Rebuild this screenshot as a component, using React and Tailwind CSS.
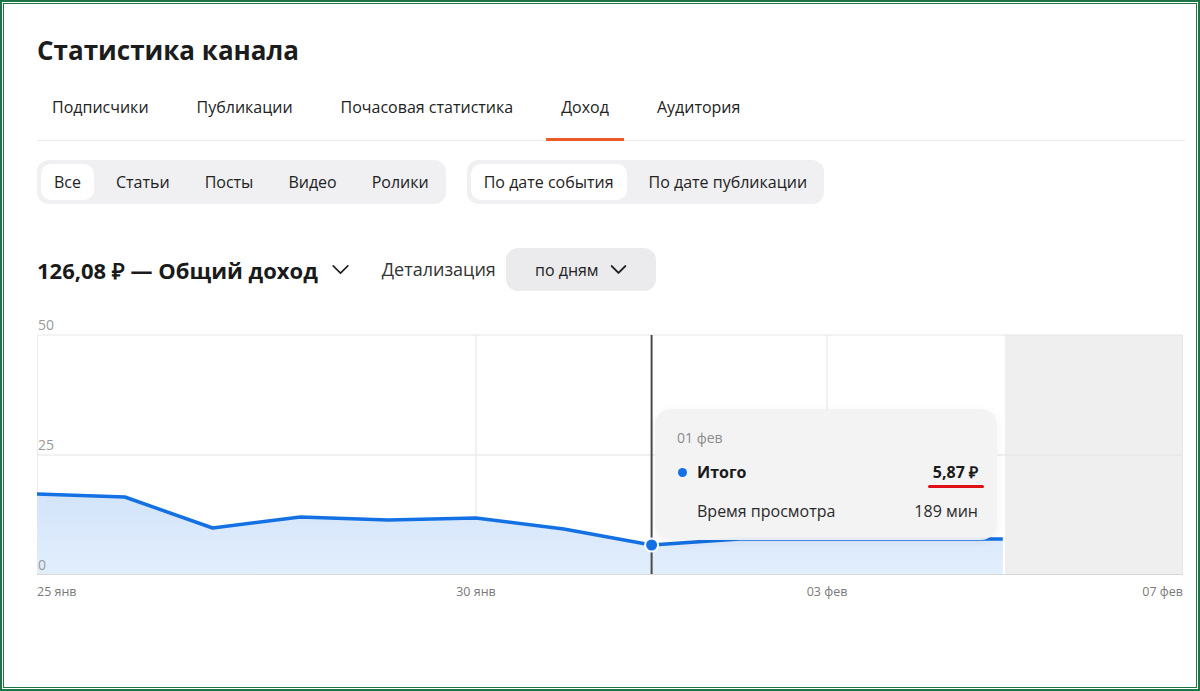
import { useState } from "react";

const tabs = ["Подписчики", "Публикации", "Почасовая статистика", "Доход", "Аудитория"];
const types = ["Все", "Статьи", "Посты", "Видео", "Ролики"];
const dates = ["По дате события", "По дате публикации"];

// y of each day's point inside the chart svg
const points = [181, 184, 215, 204, 207, 205, 216, 232, 226, 226, 226, 226];
const DAY = 87.8;

function Chevron({ className, width = 2 }) {
  return (
    <svg viewBox="0 0 20 12" className={className} fill="none">
      <polyline
        points="2,2 10,10 18,2"
        stroke="currentColor"
        strokeWidth={width}
        strokeLinecap="round"
        strokeLinejoin="round"
      />
    </svg>
  );
}

function Segments({ items, active, onPick }) {
  return (
    <div className="flex gap-[9px] rounded-[12px] bg-[#f0f0f2] p-[4px]">
      {items.map((it) => (
        <button
          key={it}
          onClick={() => onPick(it)}
          className={
            "h-[36px] rounded-[10px] px-[13px] text-[16px] leading-[36px] text-[#222] " +
            (it === active ? "bg-white" : "")
          }
        >
          {it}
        </button>
      ))}
    </div>
  );
}

function Chart() {
  const pts = points.map((y, i) => [i * DAY, y]);
  const line = pts.map((p) => p.join(",")).join(" ");
  const area = `0,261 ${line} ${pts[pts.length - 1][0]},261`;

  return (
    <div className="relative mt-[22px] h-[300px] w-[1146px]">
      <svg width="1146" height="300" className="block overflow-visible">
        <defs>
          <linearGradient id="fill" x1="0" y1="0" x2="0" y2="1">
            <stop offset="0" stopColor="#d3e4fa" />
            <stop offset="1" stopColor="#e2eefc" />
          </linearGradient>
        </defs>
        {/* future days */}
        <rect x="968" y="22" width="178" height="239" fill="#efefef" />
        {/* grid */}
        <line x1="0" y1="22" x2="1146" y2="22" stroke="#e6e6e6" />
        <line x1="0" y1="142" x2="1146" y2="142" stroke="#e3e3e3" />
        <line x1="0.5" y1="22" x2="0.5" y2="261" stroke="#ececec" />
        <line x1="1145.5" y1="22" x2="1145.5" y2="261" stroke="#e6e6e6" />
        <line x1="439" y1="22" x2="439" y2="261" stroke="#e3e3e3" />
        <line x1="790" y1="22" x2="790" y2="261" stroke="#e3e3e3" />
        <polygon points={area} fill="url(#fill)" />
        <line x1="0" y1="261.5" x2="1146" y2="261.5" stroke="#d8d8d8" />
        <polyline
          points={line}
          fill="none"
          stroke="#1371e3"
          strokeWidth="3.5"
          strokeLinejoin="round"
        />
        {/* cursor */}
        <line x1="614.6" y1="22" x2="614.6" y2="261" stroke="#4b4b4b" strokeWidth="2" />
        <circle cx="614.6" cy="232" r="6.5" fill="#1371e3" stroke="#fff" strokeWidth="2" />
        {/* axis labels */}
        <g fontFamily="'Open Sans', sans-serif" fill="#9a9a9a" fontSize="14">
          <text x="1" y="17">50</text>
          <text x="1" y="137">25</text>
          <text x="1" y="257">0</text>
        </g>
        <g fontFamily="'Open Sans', sans-serif" fill="#7a7a7a" fontSize="12.5">
          <text x="0" y="283">25 янв</text>
          <text x="439" y="283" textAnchor="middle">30 янв</text>
          <text x="790" y="283" textAnchor="middle">03 фев</text>
          <text x="1146" y="283" textAnchor="end">07 фев</text>
        </g>
      </svg>

      {/* tooltip */}
      <div className="absolute left-[618px] top-[96px] h-[131px] w-[342px] rounded-[16px] bg-[#f2f2f3]/95 pl-[22px] pr-[19px] pt-[19px] shadow-[0_2px_10px_rgba(0,0,0,0.06)]">
        <div className="text-[14px] leading-[20px] text-[#8c8c8c]">01 фев</div>
        <div className="mt-[12px] flex items-center justify-between text-[16px] font-bold leading-[24px] text-[#1a1a1a]">
          <div className="flex items-center">
            <span className="ml-[1px] mr-[10px] h-[9px] w-[9px] rounded-full bg-[#1371e3]" />
            Итого
          </div>
          <span className="relative">
            5,87 ₽
            <span className="absolute -left-[5px] -right-[6px] top-[25px] h-[3px] rounded-full bg-[#e01018]" />
          </span>
        </div>
        <div className="mt-[15px] flex items-center justify-between pl-[20px] text-[16px] leading-[24px] text-[#2a2a2a]">
          <span>Время просмотра</span>
          <span>189 мин</span>
        </div>
      </div>
    </div>
  );
}

export default function App() {
  const [tab, setTab] = useState("Доход");
  const [type, setType] = useState("Все");
  const [by, setBy] = useState("По дате события");

  return (
    <div className="h-[691px] w-[1200px] border-2 border-[#1d7444] bg-white p-px font-['Open_Sans',sans-serif]">
      <div className="h-full w-full border border-[#1d7444] pl-[33px] pr-[11px] pt-[30px]">
        <h1 className="text-[26px] font-bold leading-[32px] text-[#1c1c1c]">Статистика канала</h1>

        {/* tabs */}
        <div className="mt-[18px] flex gap-[18px] border-b border-[#ebebeb]">
          {tabs.map((t) => (
            <button
              key={t}
              onClick={() => setTab(t)}
              className={
                "-mb-px border-b-[3px] px-[15px] pb-[20px] pt-[12px] text-[16px] leading-[22px] text-[#222] " +
                (t === tab ? "border-[#ee5a26]" : "border-transparent")
              }
            >
              {t}
            </button>
          ))}
        </div>

        {/* filters */}
        <div className="mt-[19px] flex gap-[21px]">
          <Segments items={types} active={type} onPick={setType} />
          <Segments items={dates} active={by} onPick={setBy} />
        </div>

        {/* total */}
        <div className="mt-[44px] flex items-center">
          <span className="text-[22px] font-bold leading-[28px] text-[#1a1a1a]">126,08 ₽ — Общий доход</span>
          <Chevron className="ml-[13px] h-[11px] w-[19px] text-[#222]" width={1.8} />
          <span className="ml-[32px] text-[18px] text-[#333]">Детализация</span>
          <button className="ml-[10px] flex h-[43px] w-[150px] items-center justify-center gap-[11px] rounded-[12px] bg-[#ebebed] text-[16px] text-[#222]">
            по дням
            <Chevron className="h-[11px] w-[17px]" width={2.4} />
          </button>
        </div>

        <Chart />
      </div>
    </div>
  );
}
